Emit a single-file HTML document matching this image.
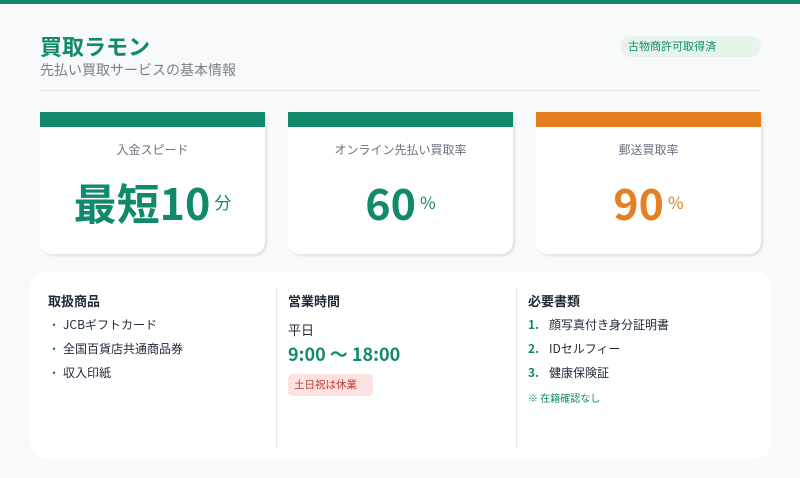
<!DOCTYPE html>
<html><head><meta charset="utf-8"><style>
*{margin:0;padding:0;box-sizing:border-box}
body{width:800px;height:478px;background:#f8f9fb;font-family:"Noto Sans CJK JP",sans-serif;position:relative;overflow:hidden;color:#1f2937}
.top{position:absolute;left:0;top:0;width:800px;height:4px;background:#108a6b}
.title{position:absolute;left:40px;top:31px;font-size:22px;font-weight:700;color:#108a6b;line-height:30px}
.sub{position:absolute;left:40px;top:60px;font-size:14px;color:#7b818b;line-height:20px}
.badge{position:absolute;left:620px;top:36px;width:141px;height:21px;border-radius:11px;background:#e6f4ea;color:#108a6b;font-size:11px;line-height:21px;padding-left:8px}
.hr{position:absolute;left:40px;top:90px;width:721px;height:1px;background:#e5e7eb}
.card{position:absolute;top:112px;width:225px;height:142px;background:#fff;border-radius:0 0 12px 12px;box-shadow:2px 2px 2px #dfe2e6;text-align:center}
.card .bar{height:15px;background:#108a6b}
.card .lab{margin-top:14px;font-size:12px;color:#6b7280;line-height:18px}
.card .num{margin-top:17px;font-size:43px;font-weight:700;line-height:52px;color:#108a6b}
.card .num small{font-size:17px;font-weight:400;margin-left:4px;vertical-align:11px}
.panel{position:absolute;left:30px;top:272px;width:741px;height:187px;background:#fff;border-radius:16px}
.vl{position:absolute;top:16px;width:1px;height:161px;background:#e5e7eb}
.col{position:absolute;top:19px}
.h{font-size:13px;font-weight:700;line-height:20px}
.it{font-size:12px;line-height:24px;color:#1f2937}
.g{color:#108a6b}
</style></head><body>
<div class="top"></div>
<div class="title">買取ラモン</div>
<div class="sub">先払い買取サービスの基本情報</div>
<div class="badge">古物商許可取得済</div>
<div class="hr"></div>
<div class="card" style="left:40px"><div class="bar"></div><div class="lab">入金スピード</div><div class="num">最短10<small>分</small></div></div>
<div class="card" style="left:288px"><div class="bar"></div><div class="lab">オンライン先払い買取率</div><div class="num">60<small>%</small></div></div>
<div class="card" style="left:536px"><div class="bar" style="background:#e67e22"></div><div class="lab">郵送買取率</div><div class="num" style="color:#e67e22">90<small>%</small></div></div>
<div class="panel">
<div class="vl" style="left:246px"></div><div class="vl" style="left:486px"></div>
<div class="col" style="left:18px"><div class="h">取扱商品</div>
<div style="margin-top:2px"><div class="it"><span class="g" style="margin:0 3px 0 0">・</span>JCBギフトカード</div><div class="it"><span class="g" style="margin:0 3px 0 0">・</span>全国百貨店共通商品券</div><div class="it"><span class="g" style="margin:0 3px 0 0">・</span>収入印紙</div></div></div>
<div class="col" style="left:258px"><div class="h">営業時間</div>
<div style="font-size:13px;margin-top:9px;line-height:20px">平日</div>
<div class="g" style="font-size:18px;font-weight:700;line-height:28px">9:00 〜 18:00</div>
<div style="margin-top:6px;width:85px;height:22px;border-radius:4px;background:#fde2e2;color:#c0392b;font-size:10.5px;line-height:22px;padding-left:6px">土日祝は休業</div></div>
<div class="col" style="left:498px"><div class="h">必要書類</div>
<div style="margin-top:2px"><div class="it"><b class="g" style="margin-right:10px">1.</b>顔写真付き身分証明書</div><div class="it"><b class="g" style="margin-right:10px">2.</b>IDセルフィー</div><div class="it"><b class="g" style="margin-right:10px">3.</b>健康保険証</div>
<div class="g" style="font-size:10px;margin-top:5px">※ 在籍確認なし</div></div></div>
</div>
</body></html>
